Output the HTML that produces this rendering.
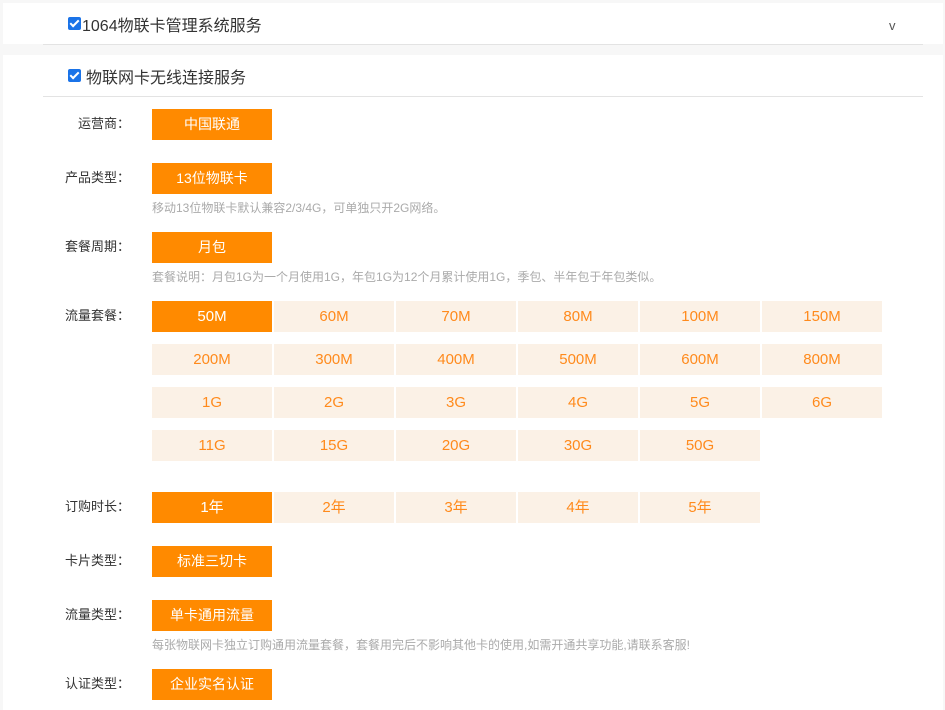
<!DOCTYPE html>
<html><head><meta charset="utf-8"><style>
*{margin:0;padding:0;box-sizing:border-box}
body{width:945px;height:710px;background:#f7f7f7;font-family:"Liberation Sans","Noto Sans CJK SC",sans-serif;position:relative;overflow:hidden}
.p{position:absolute;background:#fff}
.line{position:absolute;left:43px;width:880px;height:1px;background:#e3e3e3}
.cb{position:absolute;width:13px;height:13px;background:#1a73e8;border-radius:2px}
.cb:after{content:"";position:absolute;left:4px;top:1px;width:3px;height:7px;border:solid #fff;border-width:0 2px 2px 0;transform:rotate(45deg)}
.t{position:absolute;font-size:16px;color:#333;white-space:nowrap}
.lab{position:absolute;right:815px;font-size:13px;color:#333;white-space:nowrap;text-align:right}
.b{position:absolute;width:120px;height:31px;line-height:31px;text-align:center;font-size:15px;color:#ff8a1c;background:#fbf1e6}
.b.on{background:#ff8a00;color:#fff}
.s{font-size:14px}
.n{position:absolute;left:152px;font-size:12px;color:#aaa;white-space:nowrap}
</style></head><body>
<div class="p" style="left:3px;top:3px;width:940px;height:41px"></div>
<div class="line" style="top:44px"></div>
<div class="cb" style="left:68px;top:17px"></div>
<div class="t" style="left:82px;top:12px">1064物联卡管理系统服务</div>
<div class="t" style="left:889px;top:18px;font-size:13px;color:#555">v</div>
<div class="p" style="left:3px;top:55px;width:940px;height:655px"></div>
<div class="line" style="top:96px"></div>
<div class="cb" style="left:68px;top:69px"></div>
<div class="t" style="left:86px;top:64px">物联网卡无线连接服务</div>

<div class="lab" style="top:113px">运营商：</div>
<div class="b on s" style="left:152px;top:109px">中国联通</div>

<div class="lab" style="top:167px">产品类型：</div>
<div class="b on s" style="left:152px;top:163px">13位物联卡</div>
<div class="n" style="top:199px">移动13位物联卡默认兼容2/3/4G，可单独只开2G网络。</div>

<div class="lab" style="top:236px">套餐周期：</div>
<div class="b on s" style="left:152px;top:232px">月包</div>
<div class="n" style="top:268px">套餐说明：月包1G为一个月使用1G，年包1G为12个月累计使用1G，季包、半年包于年包类似。</div>

<div class="lab" style="top:305px">流量套餐：</div>
<div class="b on" style="left:152px;top:301px">50M</div>
<div class="b" style="left:274px;top:301px">60M</div>
<div class="b" style="left:396px;top:301px">70M</div>
<div class="b" style="left:518px;top:301px">80M</div>
<div class="b" style="left:640px;top:301px">100M</div>
<div class="b" style="left:762px;top:301px">150M</div>
<div class="b" style="left:152px;top:344px">200M</div>
<div class="b" style="left:274px;top:344px">300M</div>
<div class="b" style="left:396px;top:344px">400M</div>
<div class="b" style="left:518px;top:344px">500M</div>
<div class="b" style="left:640px;top:344px">600M</div>
<div class="b" style="left:762px;top:344px">800M</div>
<div class="b" style="left:152px;top:387px">1G</div>
<div class="b" style="left:274px;top:387px">2G</div>
<div class="b" style="left:396px;top:387px">3G</div>
<div class="b" style="left:518px;top:387px">4G</div>
<div class="b" style="left:640px;top:387px">5G</div>
<div class="b" style="left:762px;top:387px">6G</div>
<div class="b" style="left:152px;top:430px">11G</div>
<div class="b" style="left:274px;top:430px">15G</div>
<div class="b" style="left:396px;top:430px">20G</div>
<div class="b" style="left:518px;top:430px">30G</div>
<div class="b" style="left:640px;top:430px">50G</div>

<div class="lab" style="top:496px">订购时长：</div>
<div class="b on" style="left:152px;top:492px">1年</div>
<div class="b" style="left:274px;top:492px">2年</div>
<div class="b" style="left:396px;top:492px">3年</div>
<div class="b" style="left:518px;top:492px">4年</div>
<div class="b" style="left:640px;top:492px">5年</div>

<div class="lab" style="top:550px">卡片类型：</div>
<div class="b on s" style="left:152px;top:546px">标准三切卡</div>

<div class="lab" style="top:604px">流量类型：</div>
<div class="b on s" style="left:152px;top:600px">单卡通用流量</div>
<div class="n" style="top:636px">每张物联网卡独立订购通用流量套餐，套餐用完后不影响其他卡的使用,如需开通共享功能,请联系客服!</div>

<div class="lab" style="top:673px">认证类型：</div>
<div class="b on s" style="left:152px;top:669px">企业实名认证</div>
</body></html>
